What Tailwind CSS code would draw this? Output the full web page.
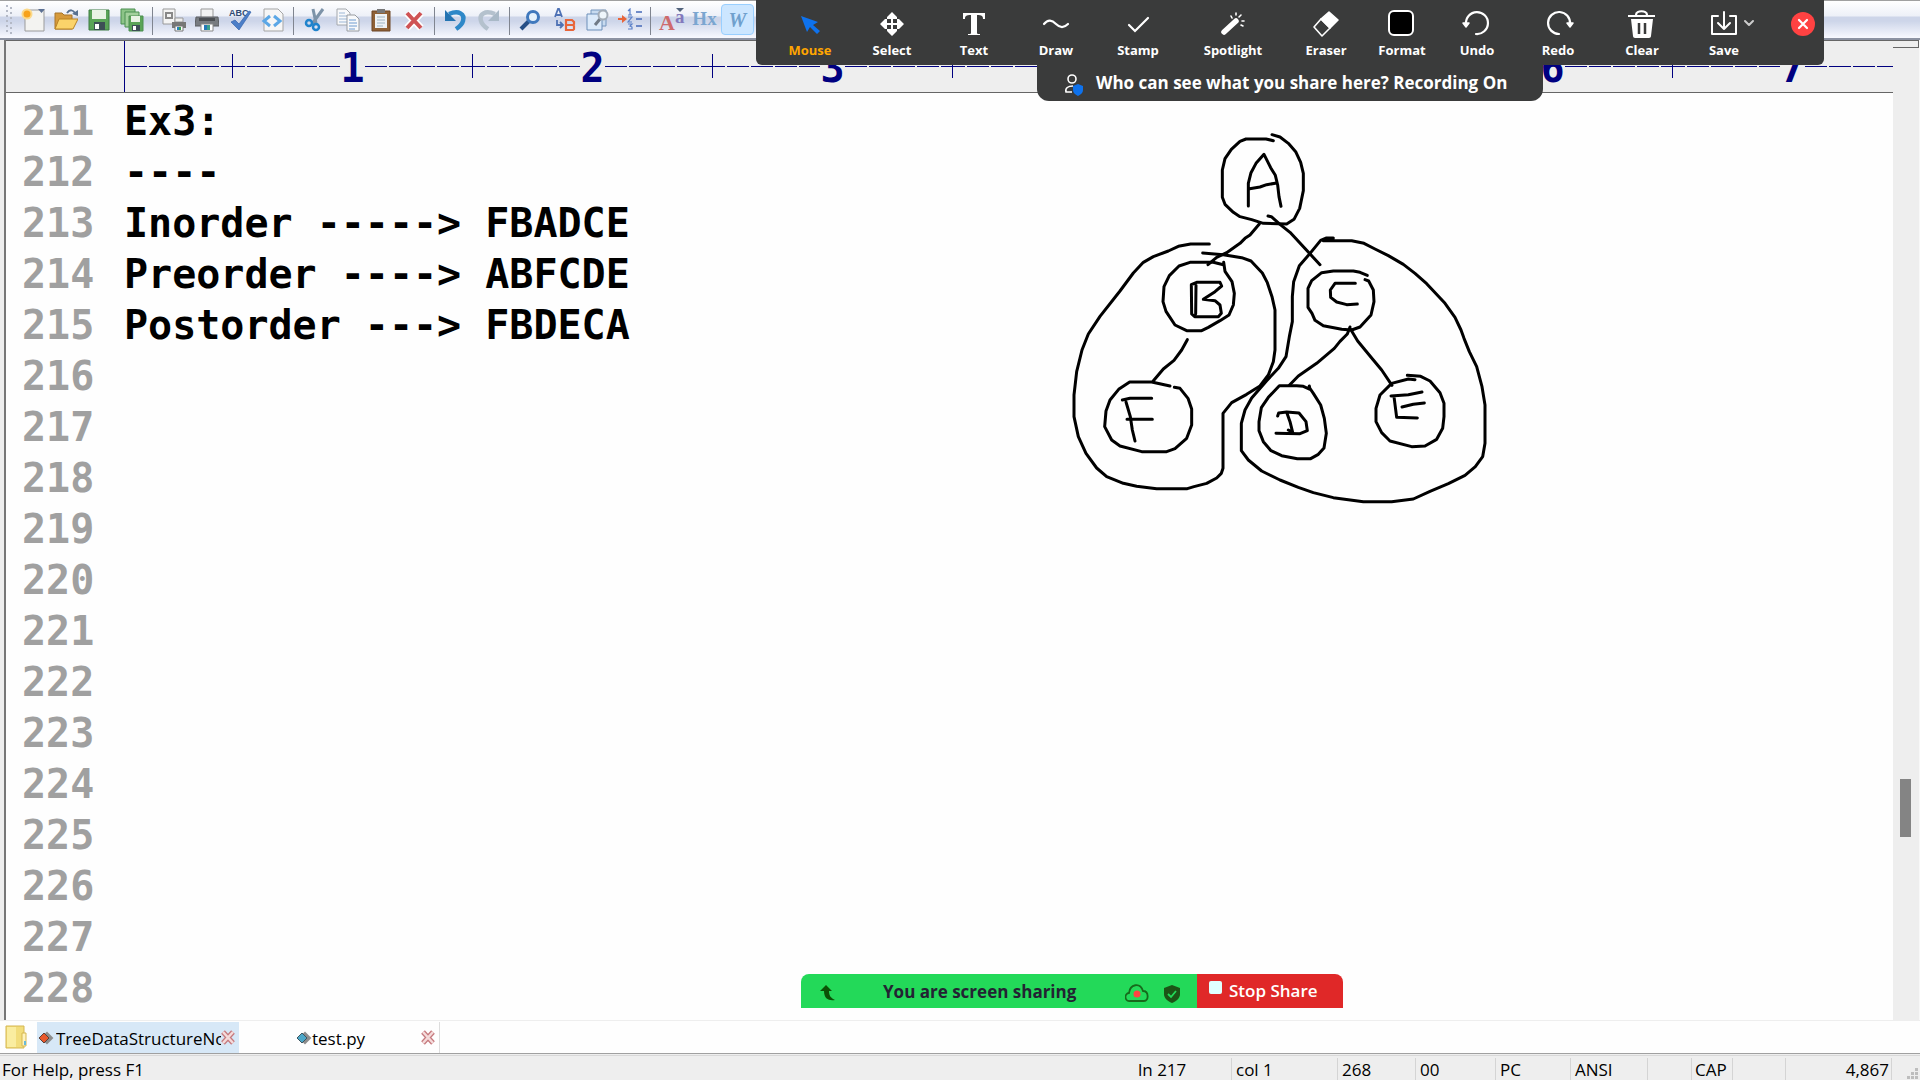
<!DOCTYPE html>
<html lang="en">
<head>
<meta charset="utf-8">
<title>TreeDataStructureNotes</title>
<script src="https://cdn.jsdelivr.net/npm/@tailwindcss/browser@4"></script>
</head>
<body class="relative h-screen overflow-hidden flex flex-col bg-[#eeeeee] font-['Open_Sans','Noto_Sans',sans-serif] text-black">

<!-- Editor toolbar -->
<header class="h-10 shrink-0 flex items-start pt-[3px] border-t border-[#a0a0a0] border-b-2 border-b-[#8d93a3] bg-[linear-gradient(#ffffff_0,#edf0f8_15px,#cdd5e9_16px,#cdd5e9_20px,#f8f9ff_37px)]">
  <svg class="w-4 h-[31px]" viewBox="0 0 16 31" fill="#b4b9c6"><path d="M6 1h2v2H6zM10 3h2v2h-2zM6 6h2v2H6zM10 8h2v2h-2zM6 11h2v2H6zM10 13h2v2h-2zM6 16h2v2H6zM10 18h2v2h-2zM6 21h2v2H6zM10 23h2v2h-2zM6 26h2v2H6zM10 28h2v2h-2z"/></svg>
  <button aria-label="New" class="w-[33px] h-[31px] flex items-center justify-center"><svg class="w-6 h-6" viewBox="0 0 24 24"><path d="M4 2h19v21H4z" fill="#f3f3f1" stroke="#9b9b9b"/><path d="M17 1h7l-3.500 4z" fill="#5c7093"/><circle cx="6" cy="6" r="5.500" fill="#fbd98a"/><circle cx="6" cy="6" r="3.500" fill="#f7a21b"/></svg></button>
  <button aria-label="Open" class="w-[33px] h-[31px] flex items-center justify-center"><svg class="w-6 h-6" viewBox="0 0 24 24"><path d="M1 5h7l2 2h8v14H1z" fill="#d69a3c" stroke="#a8752a"/><path d="M5 11h19l-5 10H1z" fill="#fbd36a" stroke="#b98223"/><path d="M13 5c3-4 6-3 8 0" fill="none" stroke="#58708f" stroke-width="2"/><path d="M18 6l6 2V2z" fill="#58708f"/></svg></button>
  <button aria-label="Save" class="w-[33px] h-[31px] flex items-center justify-center"><svg class="w-6 h-6" viewBox="0 0 24 24"><path d="M2 2h20v20H2z" fill="#5aa457" stroke="#3d7d43"/><path d="M5 2h14v9H5z" fill="#e9f3e4"/><path d="M7 14h11v8H7z" fill="#3d4f55"/><path d="M8 16h4v5H8z" fill="#fff"/></svg></button>
  <button aria-label="Save all" class="w-[33px] h-[31px] flex items-center justify-center"><svg class="w-6 h-6" viewBox="0 0 24 24" stroke="#4b8f50"><path d="M1 1h14v15H1z" fill="#8cc487"/><path d="M5 4h14v15H5z" fill="#a3d09c"/><path d="M9 8h14v15H9z" fill="#5aa457"/><path d="M11 8h9v6h-9z" fill="#e9f3e4" stroke="none"/><path d="M12 17h8v6h-8z" fill="#3d4f55" stroke="none"/><path d="M13 18h3v4h-3z" fill="#fff" stroke="none"/></svg></button>
  <span class="w-[9px] h-[29px] flex justify-center items-center pt-1"><i class="w-px h-7 bg-[#808590]"></i></span>
  <button aria-label="Print preview" class="w-[33px] h-[31px] flex items-center justify-center"><svg class="w-6 h-6" viewBox="0 0 24 24"><path d="M1 1h12v15H1z" fill="#f4f4f4" stroke="#999"/><path d="M4 5h6v5H4z" fill="none" stroke="#888" stroke-width="2"/><path d="M13 10h8v4h-8z" fill="#eee" stroke="#999"/><path d="M10 14h14v6H10z" fill="#777"/><path d="M13 18h8v5h-8z" fill="#fff" stroke="#777"/><path d="M15 19h2v3h-2z" fill="#2880c0"/><path d="M17 19h2v3h-2z" fill="#3a9b4c"/></svg></button>
  <button aria-label="Print" class="w-[33px] h-[31px] flex items-center justify-center"><svg class="w-6 h-6" viewBox="0 0 24 24"><path d="M6 1h12v9H6z" fill="#f2f2f2" stroke="#999"/><path d="M1 9h22l1 9H0z" fill="#777b80" stroke="#5c5f63"/><path d="M4 10h16v3H4z" fill="#4b4e52"/><path d="M6 16h12v7H6z" fill="#fff" stroke="#888"/><path d="M9 17h3v5H9z" fill="#2678b9"/><path d="M12 17h3v5h-3z" fill="#3aa08c"/></svg></button>
  <button aria-label="Spell check" class="w-[33px] h-[31px] flex items-center justify-center"><svg class="w-6 h-6" viewBox="0 0 24 24"><text x="1" y="8" font-size="9" font-weight="600" fill="#304a72" font-family="Liberation Sans">ABC</text><path d="M3 14l4-2 4 4L21 3l2 1L11 22z" fill="#4b7ec8" stroke="#3463ac" stroke-width=".7"/></svg></button>
  <button aria-label="View source" class="w-[33px] h-[31px] flex items-center justify-center"><svg class="w-6 h-6" viewBox="0 0 24 24"><path d="M3 1h14l5 5v17H3z" fill="#f6f6f6" stroke="#a5a5a5"/><path d="M9 8l-6 5 6 5M13 8l6 5-6 5" fill="none" stroke="#5ba7e6" stroke-width="3"/></svg></button>
  <span class="w-[9px] h-[29px] flex justify-center items-center pt-1"><i class="w-px h-7 bg-[#808590]"></i></span>
  <button aria-label="Cut" class="w-[33px] h-[31px] flex items-center justify-center"><svg class="w-6 h-6" viewBox="0 0 24 24" fill="none"><path d="M10 1l3 14M20 1L9 16" stroke="#7d93a8" stroke-width="3"/><circle cx="6" cy="15" r="3" stroke="#1f83cc" stroke-width="2.500"/><circle cx="13" cy="19" r="3" stroke="#1f83cc" stroke-width="2.500"/></svg></button>
  <button aria-label="Copy" class="w-[33px] h-[31px] flex items-center justify-center"><svg class="w-6 h-6" viewBox="0 0 24 24"><path d="M1 1h9l4 4v12H1z" fill="#f8f9fb" stroke="#a4a8ad"/><path d="M3 5h6M3 8h8M3 11h8M3 14h8" stroke="#9cb7d6"/><path d="M11 7h8l4 4v12H11z" fill="#f8f9fb" stroke="#989ca1"/><path d="M13 12h7M13 15h8M13 18h8M13 21h6" stroke="#6f9cd0"/></svg></button>
  <button aria-label="Paste" class="w-[33px] h-[31px] flex items-center justify-center"><svg class="w-6 h-6" viewBox="0 0 24 24"><path d="M3 3h18v20H3z" fill="#8f6136" stroke="#6c4726"/><path d="M6 6h12v14H6z" fill="#eef2f5"/><path d="M8 1h8v4H8z" fill="#777"/><path d="M8 9h8M8 12h8M8 15h8M8 18h6" stroke="#9fb4c4"/></svg></button>
  <button aria-label="Delete" class="w-[33px] h-[31px] flex items-center justify-center"><svg class="w-6 h-6" viewBox="0 0 24 24"><path d="M5 5l14 15M19 5L5 20" stroke="#fff" stroke-width="7"/><path d="M5 5l14 15M19 5L5 20" stroke="#cf5355" stroke-width="4"/></svg></button>
  <span class="w-[9px] h-[29px] flex justify-center items-center pt-1"><i class="w-px h-7 bg-[#808590]"></i></span>
  <button aria-label="Undo edit" class="w-[33px] h-[31px] flex items-center justify-center"><svg class="w-6 h-6" viewBox="0 0 24 24"><path d="M5 6c10-4 16 0 14 7-1 4-4 6-7 8" fill="none" stroke="#2e88c8" stroke-width="4.500"/><path d="M1 2v11h11z" fill="#2474b2"/></svg></button>
  <button aria-label="Redo edit" class="w-[33px] h-[31px] flex items-center justify-center"><svg class="w-6 h-6" viewBox="0 0 24 24"><path d="M18 6C8 2 2 6 4 13c1 4 4 6 7 8" fill="none" stroke="#b4c1cd" stroke-width="4.500"/><path d="M22 2v11H11z" fill="#a9b9c7"/></svg></button>
  <span class="w-[9px] h-[29px] flex justify-center items-center pt-1"><i class="w-px h-7 bg-[#808590]"></i></span>
  <button aria-label="Find" class="w-[33px] h-[31px] flex items-center justify-center"><svg class="w-6 h-6" viewBox="0 0 24 24"><path d="M2 21l8-8" stroke="#274f86" stroke-width="4"/><circle cx="14" cy="9" r="5.500" fill="#e4f1fc" stroke="#3f78bd" stroke-width="3"/></svg></button>
  <button aria-label="Replace" class="w-[33px] h-[31px] flex items-center justify-center"><svg class="w-6 h-6" viewBox="0 0 24 24" fill="none"><path d="M3 9l3-8h1l3 8M4 7h5M5 12v5h5M8 14l3 3-3 3" stroke="#4f72b5" stroke-width="1.800"/><path d="M14 12h6l2 2v2l-1 1 1 1v3l-1 1h-7zM14 17h7" stroke="#e8653a" stroke-width="2.200"/></svg></button>
  <button aria-label="Find in files" class="w-[33px] h-[31px] flex items-center justify-center"><svg class="w-6 h-6" viewBox="0 0 24 24"><path d="M6 2h15v16H6z" fill="#c7daef" stroke="#7495bd"/><path d="M2 6h15v16H2z" fill="#dceafa" stroke="#6c8fb9"/><path d="M10 17l5-6" stroke="#707a86" stroke-width="3"/><circle cx="18" cy="7" r="4.500" fill="#eef5fb" stroke="#a3acb7" stroke-width="2"/></svg></button>
  <button aria-label="Go to line" class="w-[33px] h-[31px] flex items-center justify-center"><svg class="w-6 h-6" viewBox="0 0 24 24"><path d="M0 10h4V7l5 4-5 4v-3H0z" fill="#e8653a"/><path d="M10 3l2-2v6m-2 0h4M10 9h4l-4 5h4M10 16h4l-2 2 2 1v2h-4" fill="none" stroke="#5b80c8" stroke-width="1.200"/><path d="M18 4h6M18 11h6M18 18h6" stroke="#4669b8" stroke-width="1.400"/></svg></button>
  <span class="w-[9px] h-[29px] flex justify-center items-center pt-1"><i class="w-px h-7 bg-[#808590]"></i></span>
  <button aria-label="Font" class="w-[33px] h-[31px] flex items-center justify-center"><svg class="w-7 h-6" viewBox="0 0 28 24" font-family="Liberation Serif" font-weight="700"><text x="1" y="22" font-size="22" fill="#ce6a6c">A</text><text x="17" y="15" font-size="19" fill="#8379bd">a</text><path d="M18 0h8l-4 4z" fill="#52637c"/></svg></button>
  <button aria-label="Hex view" class="w-[33px] h-[31px] flex items-center justify-center font-['Liberation_Serif',serif] text-[19px] font-bold text-[#7ba6d0]">Hx</button>
  <button aria-label="Word wrap" class="w-[33px] h-[31px] flex items-center justify-center rounded-sm border border-[#99cfff] bg-[#cce6ff] font-['Liberation_Serif',serif] text-xl font-bold italic text-[#6fa0cd]">W</button>
</header>

<main class="flex-1 min-h-0 flex">
  <div class="w-[6px] shrink-0 border-r-2 border-[#777777]"></div>
  <section class="flex-1 min-w-0 flex flex-col bg-[#fefefe]">
    <!-- Column ruler -->
    <div class="h-[53px] shrink-0 flex overflow-hidden border-y border-[#666666] bg-[#eeeeee] pl-[118px] font-['DejaVu_Sans_Mono',monospace] text-[40px] font-bold leading-[54px] text-[#000080]">
      <div class="w-[108px] shrink-0 border-l border-[#000080] bg-[repeating-linear-gradient(90deg,#000080_0_22px,transparent_22px_24px)] bg-size-[240px_1px] bg-position-[0_25px] bg-no-repeat"></div>
      <div class="ruler-cells flex"></div>
    </div>
    <!-- Numbered lines -->
    <ol class="flex-1 min-h-0 overflow-hidden pt-[3px] font-['DejaVu_Sans_Mono',monospace] text-[40px] font-bold leading-[51px]" id="lines"></ol>
  </section>
  <div class="w-[27px] shrink-0 flex flex-col items-start border-r border-[#f8f8f8]">
    <div class="w-full h-2 border-r border-b border-[#666666] shadow-[inset_0_1px_#666]"></div>
    <div class="ml-[7px] mt-[731px] h-[58px] w-[11px] bg-[#848484]"></div>
  </div>
</main>

<!-- Document tabs -->
<nav class="h-[33px] shrink-0 flex items-stretch border-t border-[#eeeeee] bg-[#fefefe] pt-px text-[17px] leading-[31px]">
  <svg class="w-[37px] h-[31px]" viewBox="0 0 37 31"><path d="M6 4h18v22H6z" fill="#f2dd7b" stroke="#d5b752"/><path d="M7 5h9v20H7z" fill="#faeda0"/><path d="M22 11h4v13h-4z" fill="#fff3bd" stroke="#d5b752"/><path d="M24 19h2v4h-2z" fill="#68b9d8"/></svg>
  <a href="#" class="w-[202px] flex items-center bg-[#d7e8f7] pr-1">
    <svg class="w-[19px] h-4 shrink-0" viewBox="0 0 19 16"><path d="M10 3l5 5-5 5-5-5z" fill="#8d8d8d" stroke="#8d8d8d" stroke-width="2"/><path d="M7 3l5 5-5 5-5-5z" fill="#e8582c" stroke="#5c4038"/></svg>
    <span class="flex-1 overflow-hidden whitespace-nowrap pt-px">TreeDataStructureNotes.txt</span>
    <svg class="w-[14px] h-4 shrink-0" viewBox="0 0 14 16"><path d="M2 2l10 11M12 2L2 13" stroke="#c67a7e" stroke-width="5"/><path d="M2 2l10 11M12 2L2 13" stroke="#f4dada" stroke-width="2.500"/></svg>
  </a>
  <a href="#" class="w-[201px] flex items-center border-r border-[#dddddd] pr-1">
    <span class="flex-1 flex items-center justify-center pt-px">
      <svg class="w-[17px] h-4 shrink-0" viewBox="0 0 17 16"><path d="M10 3l5 5-5 5-5-5z" fill="#8d8d8d" stroke="#8d8d8d" stroke-width="2"/><path d="M7 3l5 5-5 5-5-5z" fill="#4da7c8" stroke="#3c5560"/></svg>test.py</span>
    <svg class="w-[14px] h-4 shrink-0" viewBox="0 0 14 16"><path d="M2 2l10 11M12 2L2 13" stroke="#c67a7e" stroke-width="5"/><path d="M2 2l10 11M12 2L2 13" stroke="#f4dada" stroke-width="2.500"/></svg>
  </a>
</nav>

<!-- Status bar -->
<footer class="h-[27px] shrink-0 flex border-t border-[#a0a0a0] pt-px text-[17px] leading-[23px]">
  <div class="flex-1 flex border-t border-[#d8d8d8] pt-[2px] whitespace-nowrap">
    <span class="flex-1 pl-[2px]">For Help, press F1</span>
    <span class="w-[93px]">ln 217</span>
    <span class="w-[106px] border-l border-[#d4d4d4] pl-1">col 1</span>
    <span class="w-[78px] border-l border-[#d4d4d4] pl-1">268</span>
    <span class="w-20 border-l border-[#d4d4d4] pl-1">00</span>
    <span class="w-[75px] border-l border-[#d4d4d4] pl-1">PC</span>
    <span class="w-[77px] border-l border-[#d4d4d4] pl-1">ANSI</span>
    <span class="w-11 border-l border-[#d4d4d4]"></span>
    <span class="w-[41px] border-l border-[#d4d4d4] pl-[3px]">CAP</span>
    <span class="w-[53px] border-l border-[#d4d4d4]"></span>
    <span class="w-[107px] border-x border-[#d4d4d4] pr-[2px] text-right">4,867</span>
    <svg class="w-7 h-[22px]" viewBox="0 0 28 22" fill="#bdbdbd"><path d="M23 10h3v3h-3zM19 14h3v3h-3zM23 14h3v3h-3zM15 18h3v3h-3zM19 18h3v3h-3zM23 18h3v3h-3z"/></svg>
  </div>
</footer>

<!-- Ink annotation over the shared screen -->
<svg class="absolute left-[1060px] top-[120px] w-[440px] h-[400px] pointer-events-none" viewBox="0 0 1320 1200" fill="none" stroke="#000" stroke-width="9" stroke-linecap="round" stroke-linejoin="round">
  <path d="M640 62L618 57H558L540 64L514 88L495 116L487 150V232L495 253L520 277L540 290L575 299L610 310L680 312L702 298L719 265L730 212V160L722 127L707 95L685 70L660 51L636 44"/>
  <path d="M565 258V190L573 158L588 130L612 103L632 143L646 166L653 195L657 230L663 259M569 206L600 201L620 194L650 189"/>
  <path d="M598 312L570 345L555 355L540 370L500 398L470 412L444 434M624 288L634 290L660 313L690 337L780 434"/>
  <path d="M448 372H392L355 379L325 393L280 410L250 427L220 459L180 513L120 589L85 642L66 690L50 755L42 825V890L55 950L78 1000L110 1044L140 1070L190 1090L230 1099L290 1106H382L402 1100L440 1090L470 1074L484 1060L489 1045V880L515 848L560 823L600 798L625 765L640 725L645 690V570L636 530L622 488L607 459L573 423L545 413L490 404L428 399"/>
  <path d="M820 354H798L782 361L752 398L718 437L701 485L697 530V605L688 650L678 710L655 745L620 782L575 834L555 870L544 910V992L565 1020L605 1053L660 1080L715 1102L760 1118L820 1133L910 1145H995L1060 1137L1110 1114L1165 1091L1215 1066L1246 1040L1268 1010L1275 970V855L1266 800L1250 740L1228 695L1212 655L1203 630L1185 592L1155 550L1100 491L1065 460L1030 433L985 407L945 387L912 370L875 362H790"/>
  <path d="M490 434L460 427H390L357 438L328 467L312 500L309 545L318 574L345 615L380 632H425L445 622L480 602L507 585L520 555L523 520L516 485L495 454L491 427"/>
  <path d="M395 582L394 494L410 487H480L485 498L465 515L430 538L465 542L480 555L484 580L475 590H404L395 582M408 496L407 582"/>
  <path d="M382 659L365 690L342 721L310 747L279 784M330 798L275 786H209L176 808L150 840L138 873L134 920L155 960L180 978L245 995H320L345 986L380 955L395 915V867L384 835L360 805L343 802M187 840L210 835H275M198 846L211 890L217 930L225 963M201 898H277"/>
  <path d="M922 466L900 457L880 453H820L785 458L755 482L744 505V562L756 580L765 601L790 617L845 628L875 630L900 621L933 585L942 545L940 510L926 483L915 479M886 490H825L811 510L812 532L830 546L860 554L892 552"/>
  <path d="M870 621L862 642L840 664L823 685L770 730L715 768L688 796M870 625L893 663L935 714L965 750L996 796"/>
  <path d="M748 798L750 808L730 799L710 797H658L625 832L604 863L597 905V932L610 965L633 992L665 1007L712 1016H752L775 1003L792 984L799 940L793 895L782 855L760 820L747 801M653 888L656 879L680 876L717 879L738 905L742 932L720 941L648 940M680 877L690 905L698 937L685 930"/>
  <path d="M1065 779L1045 777L995 790L960 825L948 865V905L965 938L990 963L1055 980L1095 978L1130 958L1148 925L1152 890V850L1140 818L1110 783L1082 769L1042 766M993 828L1045 824L1086 816M1002 830L1010 892L1072 894M1026 861L1060 853L1093 849"/>
</svg>

<!-- Meeting annotation toolbar -->
<div class="absolute left-[756px] top-0 flex flex-col items-start text-white">
  <div class="h-[65px] w-[1068px] flex rounded-b-md bg-[#3a3b3b] pl-[13px] text-[13px] font-bold leading-4">
    <button class="w-[82px] pt-2 flex flex-col items-center gap-[2px] text-[#ffa500]"><svg class="w-8 h-8" viewBox="0 0 32 32"><path d="M7 8l17 6-5 3 7 6-3 3-7-7-3 5z" fill="#0e72ed"/></svg>Mouse</button>
    <button class="w-[82px] pt-2 flex flex-col items-center gap-[2px]"><svg class="w-8 h-8" viewBox="0 0 32 32" fill="#fff"><path d="M16 4l5 5v2h-4v4h4v-4h2l5 5-5 5h-2v-4h-4v4h4v2l-5 5-5-5v-2h4v-4h-4v4H9l-5-5 5-5h2v4h4v-4h-4V9z"/></svg>Select</button>
    <button class="w-[82px] pt-2 flex flex-col items-center gap-[2px]"><svg class="w-8 h-8" viewBox="0 0 32 32" fill="#fff"><path d="M5 5h22v6h-2c0-3-1-4-6-4v18c0 1 1 1 3 1v1H10v-1c2 0 3 0 3-1V7c-5 0-6 1-6 4H5z"/></svg>Text</button>
    <button class="w-[82px] pt-2 flex flex-col items-center gap-[2px]"><svg class="w-8 h-8" viewBox="0 0 32 32" fill="none" stroke="#fff" stroke-width="2.200" stroke-linecap="round"><path d="M4 16c4-5 8-4 12 0s8 4 12 0"/></svg>Draw</button>
    <button class="w-[82px] pt-2 flex flex-col items-center gap-[2px]"><svg class="w-8 h-8" viewBox="0 0 32 32" fill="none" stroke="#fff" stroke-width="2.200" stroke-linecap="round"><path d="M7 17l6 6L26 10"/></svg>Stamp</button>
    <button class="w-[108px] pt-2 flex flex-col items-center gap-[2px]"><svg class="w-8 h-8" viewBox="0 0 32 32" fill="none" stroke="#fff" stroke-linecap="round"><path d="M7 24L19 13" stroke-width="5.500"/><path d="M14 8l1 2M19 5v2M24 7l-2 2M25 13h2M24 17l2 1" stroke-width="1.600"/></svg>Spotlight</button>
    <button class="w-[78px] pt-2 flex flex-col items-center gap-[2px]"><svg class="w-8 h-8" viewBox="0 0 32 32" fill="none" stroke="#fff" stroke-width="1.600" stroke-linejoin="round"><path d="M19 4l9 8-8 8-9-9z" fill="#fff"/><path d="M11 11l9 9-8 8-8-9z"/></svg>Eraser</button>
    <button class="w-[74px] pt-2 flex flex-col items-center gap-[2px]"><svg class="w-8 h-8" viewBox="0 0 32 32"><rect x="3" y="3" width="24" height="24" rx="5" fill="#000" stroke="#fff" stroke-width="2"/></svg>Format</button>
    <button class="w-[76px] pt-2 flex flex-col items-center gap-[2px]"><svg class="w-8 h-8" viewBox="0 0 32 32" fill="none" stroke="#fff" stroke-width="2.200" stroke-linecap="round"><path d="M5 16A11 11 0 1 1 15 26"/><path d="M2 15h6l-3 4z" fill="#fff" stroke-width="1.500" stroke-linejoin="round"/></svg>Undo</button>
    <button class="w-[86px] pt-2 flex flex-col items-center gap-[2px]"><svg class="w-8 h-8" viewBox="0 0 32 32" fill="none" stroke="#fff" stroke-width="2.200" stroke-linecap="round"><path d="M28 16A11 11 0 1 0 17 26"/><path d="M25 15h6l-3 4z" fill="#fff" stroke-width="1.500" stroke-linejoin="round"/></svg>Redo</button>
    <button class="w-[82px] pt-2 flex flex-col items-center gap-[2px]"><svg class="w-8 h-8" viewBox="0 0 32 32"><path d="M2 8h27M10 7c0-5 11-5 11 0" fill="none" stroke="#fff" stroke-width="2.200"/><path d="M5 11h22l-2 17c0 1-1 2-2 2H9c-1 0-2-1-2-2z" fill="#fff"/><path d="M13 15v11M19 15v11" stroke="#3a3b3b" stroke-width="2.500"/></svg>Clear</button>
    <button class="w-[82px] pt-2 flex flex-col items-center gap-[2px]"><svg class="w-[62px] h-8" viewBox="0 0 62 32" fill="none" stroke="#fff" stroke-width="2" stroke-linecap="round" stroke-linejoin="round"><path d="M25 8h-6v18h24V8h-6M31 4v17M25 15l6 6 6-6"/><path d="M52 13l4 4 4-4" stroke="#ccc"/></svg>Save</button>
    <button aria-label="Close" class="ml-auto mr-[9px] mt-3 w-6 h-6 rounded-full bg-[#ff4242] flex items-center justify-center"><svg class="w-3 h-3" viewBox="0 0 12 12"><path d="M2 2l8 8M10 2l-8 8" stroke="#fff" stroke-width="2.200" stroke-linecap="round"/></svg></button>
  </div>
  <div class="ml-[281px] w-[506px] h-9 flex items-center rounded-b-xl bg-[#3a3b3b] pl-[27px] text-[17px] font-bold whitespace-nowrap">
    <svg class="w-5 h-6 mr-3 mt-1" viewBox="0 0 20 24" fill="none" stroke="#fff" stroke-width="1.600"><circle cx="8" cy="6" r="4"/><path d="M8 19H2c-1-4 2-6 7-6"/><path d="M14 11l5 2v4c0 3-2 4-5 6-3-2-5-3-5-6v-4z" fill="#0e72ed" stroke="none"/></svg>Who can see what you share here? Recording On</div>
</div>

<!-- Screen sharing pill -->
<div class="absolute left-[801px] bottom-[72px] h-[34px] w-[542px] flex overflow-hidden rounded-t-lg text-[17px] font-semibold whitespace-nowrap">
  <div class="w-[396px] flex items-center bg-[#23d959] text-[#232333]">
    <svg class="w-[38px] h-5 ml-[18px] mt-1 mr-[26px]" viewBox="0 0 38 20"><path d="M7 2l6 6h-3c0 5 2 7 6 9-6 1-11-1-11-9H1z" fill="#0b5206"/></svg>
    <span class="flex-1 pt-px font-bold">You are screen sharing</span>
    <svg class="w-6 h-5 mr-[15px] mt-1" viewBox="0 0 24 20"><path d="M5 18a4 4 0 0 1-1-8C5 1 15-1 18 8c6 0 6 10 1 10z" fill="none" stroke="#17691b" stroke-width="1.800"/><circle cx="12" cy="11" r="3.500" fill="#ff4242"/></svg>
    <svg class="w-4 h-[18px] mr-[17px] mt-1.5" viewBox="0 0 16 18"><path d="M8 0l8 3v6c0 4-3 7-8 9-5-2-8-5-8-9V3z" fill="#1c5416"/><path d="M4 9l3 3 5-6" fill="none" stroke="#23d959" stroke-width="1.800"/></svg>
  </div>
  <button class="flex-1 flex items-start bg-[#e02828] pl-3 pt-[5px] leading-6 text-white"><i class="w-[13px] h-[13px] mr-[7px] mt-[2px] rounded-xs bg-[#e0ffff]"></i>Stop Share</button>
</div>

<script>
  const code = {211: 'Ex3:', 212: '----', 213: 'Inorder -----> FBADCE', 214: 'Preorder ----> ABFCDE', 215: 'Postorder ---> FBDECA'};
  const list = document.getElementById('lines');
  for (let n = 211; n <= 228; n++) {
    const li = document.createElement('li');
    li.className = 'flex whitespace-pre';
    li.innerHTML = '<span class="w-[118px] shrink-0 pl-4 text-[#a0a0a0]">' + n + '</span><span></span>';
    li.lastChild.textContent = code[n] || '';
    list.append(li);
  }
  // One cell per ten columns: tick, dashes, number, dashes
  const ruler = document.querySelector('.ruler-cells');
  for (let n = 1; n <= 7; n++) {
    const cell = document.createElement('div');
    cell.className = 'w-60 shrink-0 flex';
    cell.innerHTML = '<i class="w-px h-6 mt-[13px] bg-[#000080]"></i><i class="w-[107px] h-px mt-[25px] bg-[repeating-linear-gradient(90deg,#000080_0_12px,transparent_12px_14px,#000080_14px_24px)]"></i><span class="w-[25px] text-center">' + n + '</span><i class="w-[107px] h-px mt-[25px] bg-[repeating-linear-gradient(90deg,#000080_0_22px,transparent_22px_24px)]"></i>';
    ruler.append(cell);
  }
</script>
</body>
</html>
